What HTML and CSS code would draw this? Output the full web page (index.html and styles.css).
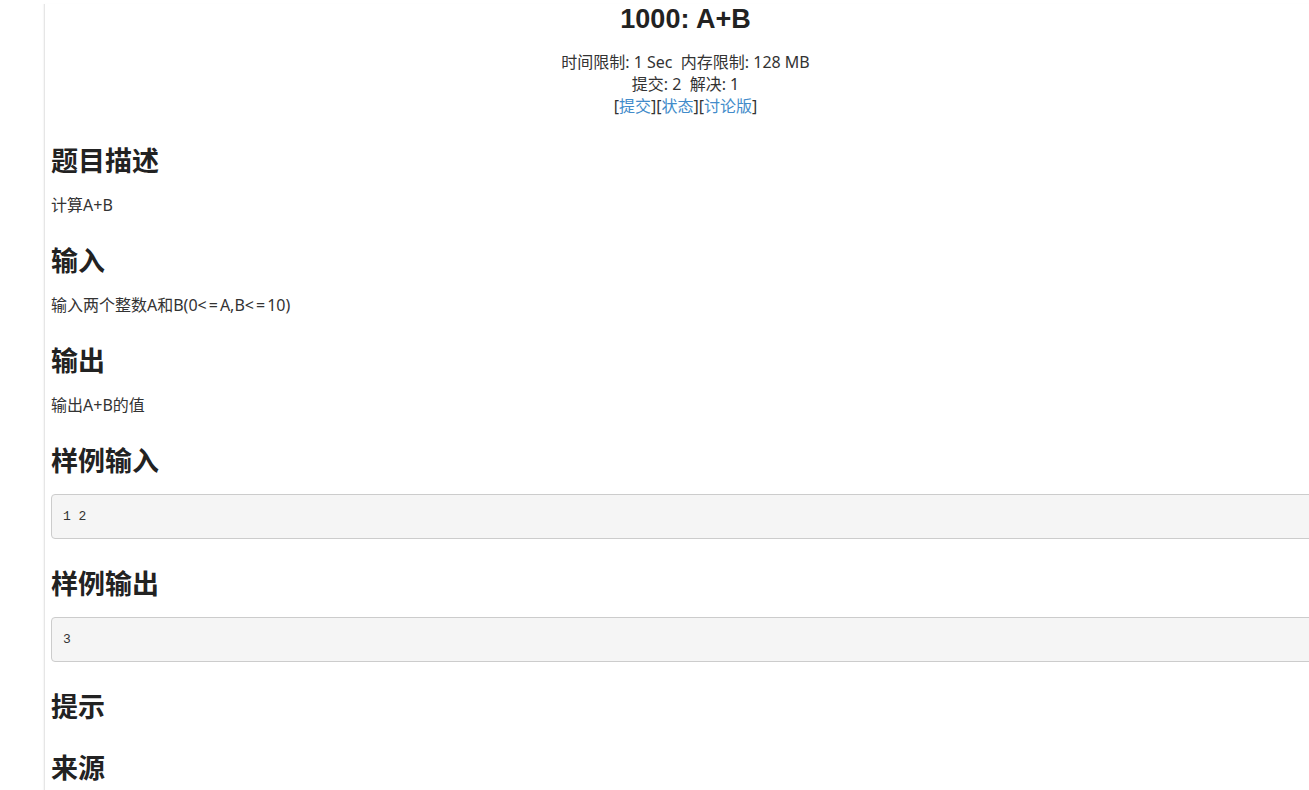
FILE: index.html
```html
<!DOCTYPE html>
<html lang="zh-CN">
<head>
<meta charset="utf-8">
<title>1000: A+B</title>
<link rel="stylesheet" href="styles.css">
</head>
<body>
<div class="page">
  <h1 class="title">1000: A+B</h1>
  <div class="info">
    <div>时间限制: 1 Sec&nbsp;&nbsp;内存限制: 128 MB</div>
    <div>提交: 2&nbsp;&nbsp;解决: 1</div>
    <div>[<a href="#">提交</a>][<a href="#">状态</a>][<a href="#">讨论版</a>]</div>
  </div>
  <h2 class="section first">题目描述</h2>
  <p class="content">计算A+B</p>
  <h2 class="section">输入</h2>
  <p class="content">输入两个整数A和B(0<span class="op">&lt;=</span>A,B<span class="op">&lt;=</span>10)</p>
  <h2 class="section">输出</h2>
  <p class="content">输出A+B的值</p>
  <h2 class="section">样例输入</h2>
  <pre class="sample">1 2</pre>
  <h2 class="section">样例输出</h2>
  <pre class="sample">3</pre>
  <h2 class="section">提示</h2>
  <h2 class="section">来源</h2>
</div>
</body>
</html>
```
FILE: styles.css
```css
html, body {
  margin: 0;
  padding: 0;
  overflow: hidden;
  background: #fff;
}

body {
  font-family: "Noto Sans", "Noto Sans CJK SC", Arial, sans-serif;
  font-size: 16px;
  line-height: 22px;
  color: #333;
}

.page {
  margin-left: 44px;
  border-left: 1px solid #e6e6e6;
  box-shadow: -1px 0 1px rgba(0, 0, 0, 0.03);
  padding-left: 6px;
  width: 1269px;
  min-height: 900px;
}

.title {
  font-family: "Liberation Sans", "Noto Sans CJK SC", Arial, sans-serif;
  font-size: 27px;
  line-height: 30px;
  font-weight: bold;
  text-align: center;
  margin: 4px 0 17px;
  color: #222;
}

.info {
  text-align: center;
  font-size: 16px;
  line-height: 22px;
  margin: 0;
}

.info a {
  color: #428bca;
  text-decoration: none;
}

.section {
  font-family: "Liberation Sans", "Noto Sans CJK SC", Arial, sans-serif;
  font-size: 27px;
  line-height: 30px;
  font-weight: bold;
  margin: 31px 0 17px;
  color: #222;
}

.section.first {
  margin-top: 30px;
}

.content {
  margin: 18px 0 32px;
  font-size: 16px;
  line-height: 20px;
}

.content .op {
  letter-spacing: 2px;
}

.sample {
  margin: 0;
  padding: 11px;
  font-family: "Liberation Mono", "DejaVu Sans Mono", monospace;
  font-size: 13px;
  line-height: 21px;
  background: #f5f5f5;
  border: 1px solid #ccc;
  border-radius: 4px;
  color: #333;
}
```
